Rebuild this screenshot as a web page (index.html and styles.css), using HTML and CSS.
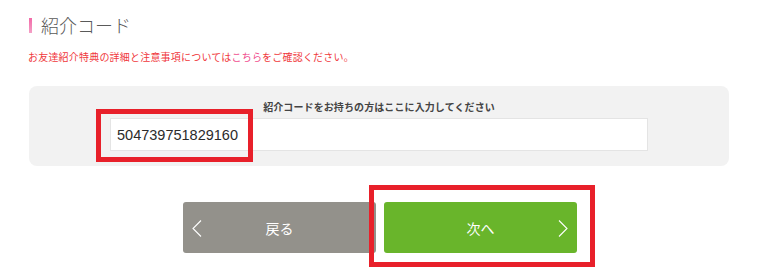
FILE: index.html
```html
<!DOCTYPE html>
<html lang="ja">
<head>
<meta charset="utf-8">
<title>紹介コード</title>
<link rel="stylesheet" href="styles.css">
</head>
<body>
<div class="page">
  <h2 class="title">紹介コード</h2>
  <p class="notice">お友達紹介特典の詳細と注意事項については<span class="link">こちら</span>をご確認ください。</p>
  <div class="code-box">
    <div class="label">紹介コードをお持ちの方はここに入力してください</div>
    <input class="code-input" type="text" value="504739751829160">
    <div class="mark mark-input"></div>
  </div>
  <div class="actions">
    <a class="btn btn-back">
      <svg class="chev chev-left" width="10" height="17" viewBox="0 0 10 17"><polyline points="9,0.5 1,8.5 9,16.5" fill="none" stroke="#ffffff" stroke-width="1.1"/></svg>
      <span>戻る</span>
    </a>
    <div class="next-wrap">
      <a class="btn btn-next">
        <span>次へ</span>
        <svg class="chev chev-right" width="10" height="17" viewBox="0 0 10 17"><polyline points="1,0.5 9,8.5 1,16.5" fill="none" stroke="#ffffff" stroke-width="1.1"/></svg>
      </a>
      <div class="mark mark-next"></div>
    </div>
  </div>
</div>
</body>
</html>
```
FILE: styles.css
```css
html, body {
  margin: 0;
  padding: 0;
  background: #ffffff;
}
body {
  font-family: "Noto Sans CJK JP", "Noto Sans", sans-serif;
  color: #333333;
  min-height: 275px;
}
.page {
  padding: 0 31px 24px 28px;
}
.title {
  display: flex;
  align-items: center;
  margin: 14px 0 0 1px;
  font-size: 18px;
  line-height: 22px;
  font-weight: 300;
  color: #5a5a5a;
}
.title::before {
  content: "";
  display: block;
  width: 3px;
  height: 15px;
  margin-right: 9px;
  background: linear-gradient(#f26aa8, #f4a0c6);
}
.notice {
  margin: 14px 0 0;
  font-size: 10px;
  line-height: 14px;
  color: #f0383c;
  letter-spacing: 0.2px;
}
.notice .link {
  color: #f0508f;
}
.code-box {
  position: relative;
  margin: 22px 0 0 1px;
  padding: 14px 0 15px;
  background: #f2f2f2;
  border-radius: 8px;
}
.label {
  font-size: 10px;
  line-height: 14px;
  font-weight: 700;
  color: #444444;
  text-align: center;
  letter-spacing: 0.1px;
}
.code-input {
  display: block;
  box-sizing: border-box;
  width: 538px;
  height: 33px;
  margin: 4px auto 0;
  padding: 0 0 0 6px;
  border: 1px solid #e4e4e4;
  background: #ffffff;
  font-family: "Liberation Sans", Arial, sans-serif;
  font-size: 14.5px;
  color: #2b2b2b;
  outline: none;
}
.mark {
  position: absolute;
  box-sizing: border-box;
  border: 5px solid #e8202a;
}
.mark-input {
  left: 67px;
  top: 23px;
  width: 157px;
  height: 53px;
}
.actions {
  display: flex;
  justify-content: center;
  gap: 8px;
  margin-top: 36px;
  padding-left: 3px;
}
.next-wrap {
  position: relative;
}
.btn {
  position: relative;
  display: flex;
  align-items: center;
  justify-content: center;
  width: 193px;
  height: 51px;
  border-radius: 3px;
  color: #ffffff;
  font-size: 14px;
  text-decoration: none;
}
.btn-back {
  background: #93918b;
}
.btn-next {
  background: #69b52b;
}
.chev {
  position: absolute;
  top: 18px;
}
.chev-left {
  left: 9px;
}
.chev-right {
  right: 9px;
}
.mark-next {
  left: -15px;
  top: -17px;
  right: -18px;
  bottom: -14px;
}
```
